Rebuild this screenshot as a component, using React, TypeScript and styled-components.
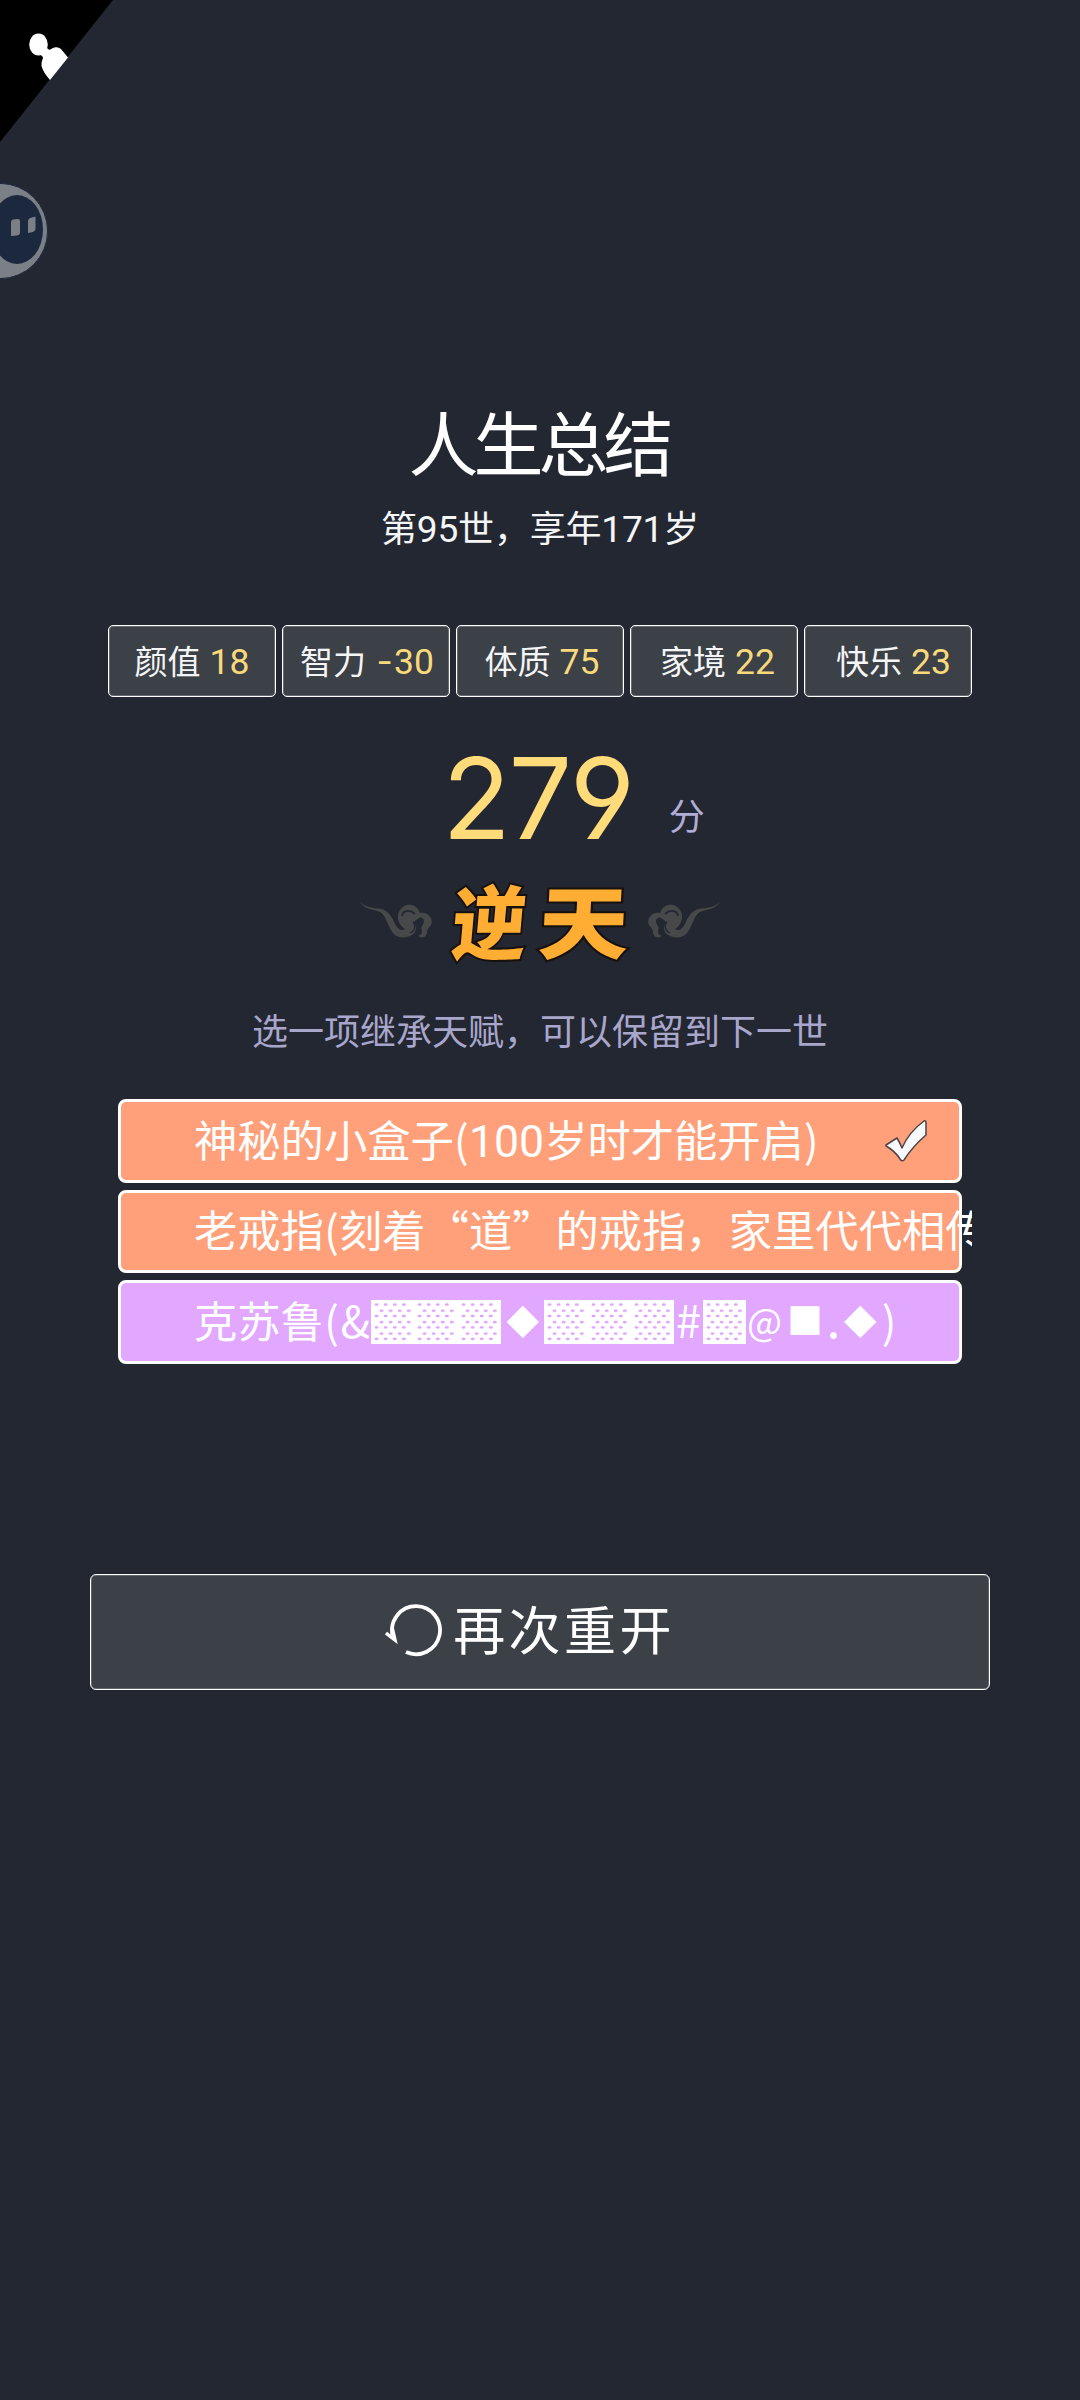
import React from "react";
import styled, { createGlobalStyle } from "styled-components";

const han = `"Noto Sans CJK SC", sans-serif`;
const mixed = `Inter, "Noto Sans CJK SC", sans-serif`;

const GlobalStyle = createGlobalStyle`
  * { box-sizing: border-box; }
  body { margin: 0; background: #232731; }
`;

const Page = styled.main`
  position: relative;
  display: flex;
  flex-direction: column;
  align-items: center;
  width: 1080px;
  height: 2400px;
  padding-top: 401px;
  overflow: hidden;
  background: #232731;
  color: #fff;
  font-family: ${han};
`;

const Corner = styled.svg`
  position: absolute;
  left: 0;
  top: 0;
`;

const FloatingBall = styled.svg`
  position: absolute;
  left: 0;
  top: 180px;
`;

const Title = styled.h1`
  margin: 0;
  padding-right: 3px;
  font-size: 70px;
  font-weight: 400;
  line-height: 80px;
  letter-spacing: -5px;
`;

const Subtitle = styled.p`
  margin: 21px 0 0;
  font-family: ${mixed};
  font-size: 36px;
  line-height: 54px;
  letter-spacing: -0.2px;
  color: #f4f5f6;
`;

const Digits = styled.span`
  font-family: Roboto, sans-serif;
  font-size: 1.03em;
  line-height: 1;
`;

const Stats = styled.ul`
  display: flex;
  gap: 6px;
  margin: 69px 0 0;
  padding: 0;
  list-style: none;
`;

const Stat = styled.li<{ $shift: number }>`
  display: flex;
  align-items: baseline;
  justify-content: center;
  gap: 9px;
  width: 168px;
  height: 72px;
  padding-top: 12px;
  padding-left: ${(p) => Math.max(0, p.$shift * 2)}px;
  border: 1px solid #fff;
  border-radius: 5px;
  box-shadow: inset 0 0 0 1px rgba(255, 255, 255, 0.22);
  background: #3c4047;
  font-family: ${mixed};
  font-size: 33px;
  line-height: 48px;
  color: #f4f5f6;
  white-space: nowrap;
`;

const StatValue = styled(Digits)`
  display: flex;
  align-items: baseline;
  font-size: 35.5px;
  color: #f8d97c;
`;

const Minus = styled.span`
  width: 19px;
  font-family: Inter, sans-serif;
  text-align: center;
`;

const Score = styled.div`
  display: flex;
  align-items: flex-start;
  gap: 36px;
  height: 130px;
  margin-top: 36px;
  padding-left: 67px;
`;

const ScoreValue = styled.span`
  font-family: Inter, sans-serif;
  font-feature-settings: "ss01", "cv04";
  font-size: 112.5px;
  line-height: 131px;
  letter-spacing: -0.021em;
  color: #ffdb7a;
`;

const ScoreUnit = styled.span`
  margin-top: 56px;
  font-size: 36px;
  line-height: 50px;
  color: #b1add6;
`;

const Rank = styled.div`
  display: flex;
  align-items: center;
  justify-content: space-between;
  width: 360px;
  height: 96px;
  margin-top: 9px;
`;

const RankText = styled.strong`
  display: flex;
  gap: 14px;
  margin: -5px 3px 0 -3px;
  font-size: 80px;
  font-weight: 900;
  line-height: 96px;
  color: #ffad33;
  -webkit-text-stroke: 4px #17110d;
  paint-order: stroke fill;
`;

const Brush = styled.span<{ $angle: number; $stretch: number }>`
  display: inline-block;
  transform: skewX(${(p) => p.$angle}deg) scaleX(${(p) => p.$stretch});
`;

const Cloud = styled.svg<{ $flip?: boolean }>`
  flex: none;
  transform: ${(p) => (p.$flip ? "scaleX(-1)" : "none")};
`;

const Hint = styled.p`
  margin: 34px 0 0;
  font-size: 36px;
  line-height: 54px;
  color: #a9a6cc;
`;

const Talents = styled.ul`
  display: flex;
  flex-direction: column;
  gap: 7px;
  width: 864px;
  margin: 43px 0 0;
  padding: 0 10px;
  overflow: hidden;
  list-style: none;
`;

const Talent = styled.li<{ $color: string }>`
  display: flex;
  align-items: center;
  justify-content: space-between;
  height: 83.6px;
  padding: 0 31px 0 73px;
  border: 3px solid #fff;
  border-radius: 8px;
  background: ${(p) => p.$color};
  font-size: 43.3px;
  line-height: 60px;
  white-space: nowrap;
`;

const TalentName = styled.span`
  display: block;
  height: 60px;
  margin-top: -6px;
`;

const Symbol = styled.span<{ $width: number; $size?: number; $lift?: number }>`
  display: inline-block;
  width: ${(p) => p.$width}px;
  font-size: ${(p) => p.$size ?? 43.3}px;
  line-height: 1;
  text-align: center;
  vertical-align: ${(p) => p.$lift ?? 0}px;
`;

const Shade = styled.span`
  position: relative;
  display: inline-block;
  width: 43.3px;
  height: 43.7px;
  background: #fff;
  font-size: 38px;
  line-height: 43.7px;
  text-align: center;
  vertical-align: -0.2px;

  &::before,
  &::after {
    content: "";
    position: absolute;
    width: 36.4px;
    background: radial-gradient(ellipse 2.4px 1.6px at 50% 50%, #dfa2fd 70%, transparent 100%) 0 0 / 9.1px 11.45px;
  }
  &::before {
    left: 1px;
    top: 0;
    height: 43.7px;
    background-position: 0 -1.2px;
  }
  &::after {
    left: 5.5px;
    top: 4.4px;
    height: 34.35px;
  }
`;

const Restart = styled.button`
  display: flex;
  align-items: center;
  justify-content: center;
  gap: 11px;
  width: 900px;
  height: 116px;
  margin: 210px 0 0;
  padding: 0 20px 4px 0;
  border: 1px solid #fff;
  border-radius: 6px;
  box-shadow: inset 0 0 0 1px rgba(255, 255, 255, 0.2);
  background: #3c4047;
  color: #fff;
  font-family: ${han};
  font-size: 52px;
  line-height: 76px;
  letter-spacing: 3.4px;
`;

const RestartLabel = styled.span`
  margin-top: -4px;
`;

const stats = [
  { name: "颜值", value: "18", shift: 0 },
  { name: "智力", value: "-30", shift: 1 },
  { name: "体质", value: "75", shift: 2 },
  { name: "家境", value: "22", shift: 3.5 },
  { name: "快乐", value: "23", shift: 5.5 },
];

const talents = [
  { text: "神秘的小盒子(100岁时才能开启)", color: "#ffa07a", picked: true },
  { text: "老戒指(刻着“道”的戒指，家里代代相传)", color: "#ffa07a", picked: false },
  { text: "克苏鲁(&▓▓▓◆▓▓▓#▓@■.◆)", color: "#e2a7ff", picked: false },
];

const symbols: Record<string, { width: number; size?: number; lift?: number }> = {
  "(": { width: 15.2 },
  ")": { width: 13.5 },
  "&": { width: 32.1 },
  "#": { width: 28.4, size: 45 },
  "@": { width: 37.3, size: 37, lift: 2 },
  "■": { width: 43.3, size: 36, lift: 3 },
  ".": { width: 12, size: 50 },
  "◆": { width: 43.3, size: 33, lift: 4 },
};

const withDigits = (text: string) =>
  text.split(/(\d+)/).map((part, i) =>
    /^\d/.test(part) ? <Digits key={i}>{part}</Digits> : part
  );

const renderTalent = (text: string) =>
  text.split(/(\d+|[()&#@■.◆▓])/).map((part, i) => {
    if (part === "▓") return <Shade key={i}>{part}</Shade>;
    if (/^\d/.test(part)) return <Digits key={i}>{part}</Digits>;
    const s = symbols[part];
    return s ? (
      <Symbol key={i} $width={s.width} $size={s.size} $lift={s.lift}>{part}</Symbol>
    ) : (
      part
    );
  });

const CloudShape = ({ flip }: { flip?: boolean }) => (
  <Cloud $flip={flip} width="74" height="38" viewBox="0 0 74 38" fill="none">
    <path
      d="M0 0C4 6 12 7 22 8C31 11 33 20 37 26C39 29 42 30 45 28C38 24 36 15 40 9C45 1 57 2 60 12C68 10 74 18 71 24C69 27 67 28 67 31C67 36 62 38 58 35C65 33 60 28 62 25C66 20 63 15 59 17C57 18 56 20 53 21C57 25 57 31 52 34C45 38 37 37 33 32C27 24 26 14 20 11C13 8 4 9 0 0Z"
      fill="#474849"
    />
    <path d="M42 15C43 9 50 8 55 13" stroke="#232731" strokeWidth="1.8" />
    <path d="M53 21C56 25 55 30 50 32" stroke="#232731" strokeWidth="1.2" />
  </Cloud>
);

export default function App() {
  return (
    <>
      <GlobalStyle />
      <Page>
        <Corner width="114" height="144" viewBox="0 0 114 144">
          <path d="M0 0H113L0 142Z" fill="#000" />
          <ellipse cx="38.5" cy="44.5" rx="9.3" ry="11" fill="#fff" />
          <path d="M40 46L47 48Q49 51 52 48.500Q57 46 61 49L68 57.500L50 80Q43 72 41.500 66Q41 62 43 58Q43 56 39 54Z" fill="#fff" />
        </Corner>
        <FloatingBall width="50" height="102" viewBox="0 180 50 102">
          <circle cx="0" cy="231" r="47.6" fill="#7b7f86" stroke="#1d2940" strokeWidth="1" />
          <ellipse cx="17" cy="229.5" rx="26" ry="34.5" fill="#1c283d" />
          <path d="M11 222Q11 220 13 219.500L18 219Q20 219 20 221V232Q20 235 17 235.500L11 236Z" fill="#7b7f86" />
          <path d="M28 221Q28 219 30 218L35.500 216.500V229Q35 231 33 232L28 233Z" fill="#7b7f86" />
        </FloatingBall>

        <Title>人生总结</Title>
        <Subtitle>{withDigits("第95世，享年171岁")}</Subtitle>

        <Stats>
          {stats.map((s) => (
            <Stat key={s.name} $shift={s.shift}>
              {s.name}
              <StatValue>
                {s.value.startsWith("-") && <Minus>-</Minus>}
                {s.value.replace("-", "")}
              </StatValue>
            </Stat>
          ))}
        </Stats>

        <Score>
          <ScoreValue>279</ScoreValue>
          <ScoreUnit>分</ScoreUnit>
        </Score>

        <Rank>
          <CloudShape />
          <RankText>
            <Brush $angle={-5} $stretch={0.93}>逆</Brush>
            <Brush $angle={-3} $stretch={1.13}>天</Brush>
          </RankText>
          <CloudShape flip />
        </Rank>

        <Hint>选一项继承天赋，可以保留到下一世</Hint>

        <Talents>
          {talents.map((t) => (
            <Talent key={t.text} $color={t.color}>
              <TalentName>{renderTalent(t.text)}</TalentName>
              {t.picked && (
                <svg width="44" height="44" viewBox="0 0 44 44">
                  <path
                    d="M2 26L13 19Q16 24 18 29Q25 13 40 2Q42 1 42 4V16Q29 27 20 41Q18 43 16 40Q11 32 2 27Z"
                    fill="#f7f9ff"
                    stroke="#4a4442"
                    strokeWidth="1.5"
                    strokeLinejoin="round"
                  />
                </svg>
              )}
            </Talent>
          ))}
        </Talents>

        <Restart>
          <svg width="57" height="56" viewBox="0 0 57 56" fill="none" stroke="#fff" strokeWidth="3.8">
            <path d="M21 50A24 24 0 1 0 7.500 33" />
            <path d="M1 31L10 38L7 25" strokeWidth="3.4" />
          </svg>
          <RestartLabel>再次重开</RestartLabel>
        </Restart>
      </Page>
    </>
  );
}
